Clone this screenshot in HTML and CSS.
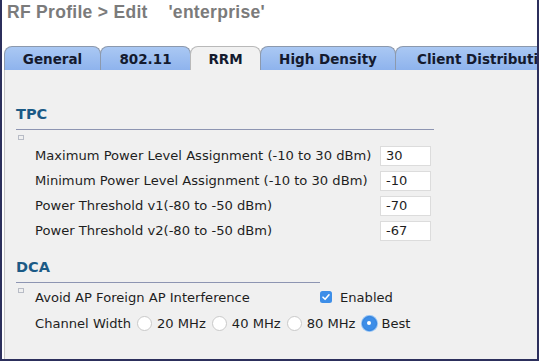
FILE: index.html
```html
<!DOCTYPE html>
<html lang="en">
<head>
<meta charset="UTF-8" />
<title>RF Profile > Edit</title>
<link rel="stylesheet" href="styles.css">
</head>
<body>
<div class="frame">
  <h1 class="title">RF Profile &gt; Edit&nbsp;&nbsp;&nbsp; 'enterprise'</h1>

  <ul class="tabs">
    <li class="tab t-general">General</li>
    <li class="tab t-80211">802.11</li>
    <li class="tab t-rrm active">RRM</li>
    <li class="tab t-hd">High Density</li>
    <li class="tab t-cd">Client Distribution</li>
  </ul>

  <div class="panel">
    <h2 class="section tpc">TPC</h2>
    <span class="mark"></span>
    <div class="rows rows-tpc">
      <div class="row"><label>Maximum Power Level Assignment (-10 to 30 dBm)</label><input type="text" value="30" /></div>
      <div class="row"><label>Minimum Power Level Assignment (-10 to 30 dBm)</label><input type="text" value="-10" /></div>
      <div class="row"><label>Power Threshold v1(-80 to -50 dBm)</label><input type="text" value="-70" /></div>
      <div class="row"><label>Power Threshold v2(-80 to -50 dBm)</label><input type="text" value="-67" /></div>
    </div>

    <h2 class="section dca">DCA</h2>
    <span class="mark"></span>
    <div class="rows rows-dca">
      <div class="row avoid">
        <label>Avoid AP Foreign AP Interference</label>
        <span class="check"><svg width="12" height="12" viewBox="0 0 12 12"><rect width="12" height="12" rx="2.5" fill="#3d8ee8"/><path d="M3 6.2 L5.1 8.3 L9 3.8" fill="none" stroke="#fff" stroke-width="1.6" stroke-linecap="round" stroke-linejoin="round"/></svg></span>
        <span>Enabled</span>
      </div>
      <div class="row width">
        <label>Channel Width</label>
        <span class="radio"></span><span>20 MHz</span>
        <span class="radio"></span><span>40 MHz</span>
        <span class="radio"></span><span>80 MHz</span>
        <span class="radio on"></span><span>Best</span>
      </div>
    </div>
  </div>
</div>
</body>
</html>
```

FILE: styles.css
```css
html, body { margin: 0; padding: 0; }
body { background: #fff; font-family: "DejaVu Sans", Verdana, sans-serif; }
.frame { width: 539px; height: 361px; box-sizing: border-box; border: 2px solid #2c2f5c; border-top: 0; overflow: hidden; display: flex; flex-direction: column; background: #fff; }
.title { margin: 0; padding: 2px 0 0 5px; height: 46px; box-sizing: border-box; font: bold 17.5px "Liberation Sans", Arial, sans-serif; letter-spacing: 0.3px; color: #7b7b7b; white-space: pre; }
.tabs { list-style: none; margin: 0; padding: 0 0 0 2px; display: flex; height: 24px; white-space: nowrap; overflow: hidden; }
.tab { flex: none; box-sizing: border-box; height: 24px; padding-top: 4px; text-align: center; font-weight: bold; font-size: 13.5px; color: #141a2e; background: linear-gradient(#aac8f3, #8eb3ed); border: 1px solid #8c99ad; border-bottom: 0; border-radius: 8px 8px 0 0; margin-right: -1px; }
.tab.active { background: #f1f1f1; border-color: #b9b9b9; }
.t-general { width: 97px; }
.t-80211 { width: 91px; }
.t-rrm { width: 71px; }
.t-hd { width: 136px; }
.t-cd { width: 150px; text-align: left; padding-left: 21px; }
.panel { flex: 1; background: #f0f0f0; border-left: 1px solid #c4c4c4; margin-left: 2px; padding: 36px 0 0 11px; color: #1e1e1e; font-size: 13.1px; }
.section { margin: 0; font-size: 14.5px; line-height: 17px; font-weight: bold; color: #1b5a86; padding-bottom: 6px; border-bottom: 1px solid #8d95b2; }
.tpc { width: 418px; }
.dca { width: 304px; margin-top: 16px; }
.mark { display: block; width: 4px; height: 3px; margin: 5px 0 -10px 2px; border: 1px solid #b8bcc6; }
.rows { padding-left: 19px; }
.rows-tpc { padding-top: 13px; }
.rows-dca { padding-top: 1px; }
.row { display: flex; align-items: center; height: 25px; }
.rows-dca .row { height: 26px; }
.row label { width: 345px; }
.row input { width: 51px; height: 20px; box-sizing: border-box; border: 1px solid #dcdcdc; background: #fff; font: 13px "DejaVu Sans", Verdana, sans-serif; color: #1e1e1e; padding: 0 0 0 5px; }
.avoid label { width: 285px; }
.check { display: flex; margin-right: 8px; }
.width label { width: auto; margin-right: 6px; }
.radio { width: 15px; height: 15px; box-sizing: border-box; border: 1px solid #c9c9c9; border-radius: 50%; background: #fff; margin: 0 5px 0 6px; }
.radio:first-of-type { margin-left: 0; }
.radio.on { background: #3d8ee8; border-color: #2f7fdb; box-shadow: 0 0 0 1px #8ec0f5; position: relative; }
.radio.on::after { content: ""; position: absolute; left: 4.5px; top: 4.5px; width: 4px; height: 4px; border-radius: 50%; background: #fff; }
```
